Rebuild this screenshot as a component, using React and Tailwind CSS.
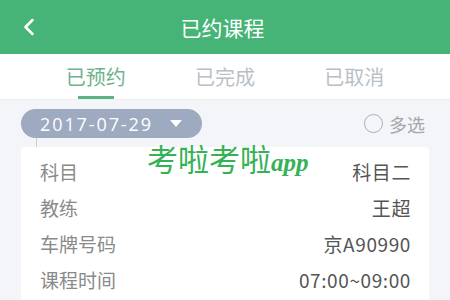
import { ChevronLeft } from 'lucide-react';

const tabs = ['已预约', '已完成', '已取消'];

const rows = [
  ['科目', '科目二'],
  ['教练', '王超'],
  ['车牌号码', '京A90990'],
  ['课程时间', '07:00~09:00'],
];

export default function App() {
  return (
    <div
      className="relative w-[450px] h-[300px] overflow-hidden bg-[#f4f5f8]"
      style={{ fontFamily: '"Noto Sans CJK SC", "Noto Sans", sans-serif' }}
    >
      {/* Header */}
      <div className="h-[54px] bg-[#46b477] flex items-center relative">
        <ChevronLeft className="ml-[15px] text-white" size={28} strokeWidth={2.2} />
        <h1 className="absolute left-0 right-[5px] text-center text-white text-[21px] leading-none">已约课程</h1>
      </div>

      {/* Tabs */}
      <div className="h-[46px] bg-white grid grid-cols-3 px-[31px] border-b border-[#eceef1]">
        {tabs.map((t, i) => (
          <div key={t} className="relative flex items-center justify-center">
            <span className={`text-[20px] leading-none ${i === 0 ? 'text-[#6fb28d]' : 'text-[#b9bfc7]'}`}>{t}</span>
            {i === 0 && <span className="absolute bottom-0 w-[36px] h-[3px] bg-[#5cb482]" />}
          </div>
        ))}
      </div>

      {/* Date + multi select */}
      <div className="flex items-center justify-between pl-[21px] pr-[25px] mt-[9px]">
        <div className="h-[29px] w-[181px] rounded-full bg-[#9eaabf] flex items-center pl-[19px]">
          <span className="text-white text-[18px] leading-none tracking-[1.9px]" style={{ fontFamily: '"Open Sans", sans-serif' }}>2017-07-29</span>
          <span className="ml-[17px] w-0 h-0 border-l-[6px] border-r-[6px] border-t-[7px] border-l-transparent border-r-transparent border-t-white" />
        </div>
        <div className="flex items-center gap-[6px]">
          <span className="w-[19px] h-[19px] rounded-full border-[1.5px] border-[#a9adb3]" />
          <span className="text-[18px] leading-none text-[#a3a7ad]">多选</span>
        </div>
      </div>
      <div className="ml-[36px] w-px h-[9px] bg-[#c9ccd2]" />

      {/* Card */}
      <div className="mx-[21px] bg-white rounded-t-[4px] pt-[6px] pl-[19px] pr-[18px] h-[160px]">
        {rows.map(([k, v]) => (
          <div key={k} className="h-[36px] flex items-center justify-between">
            <span className="text-[19px] text-[#8a8a8a] leading-none">{k}</span>
            <span className="text-[19px] text-[#555] leading-none tracking-[0.6px]">{v}</span>
          </div>
        ))}
      </div>

      {/* Watermark */}
      <div className="absolute left-[147px] top-[142px] flex items-baseline text-[#35b156]">
        <span className="text-[31px] leading-none" style={{ fontFamily: '"Noto Sans CJK SC", serif' }}>考啦考啦</span>
        <span className="text-[25px] italic font-bold leading-none" style={{ fontFamily: '"Liberation Serif", serif' }}>app</span>
      </div>
    </div>
  );
}
